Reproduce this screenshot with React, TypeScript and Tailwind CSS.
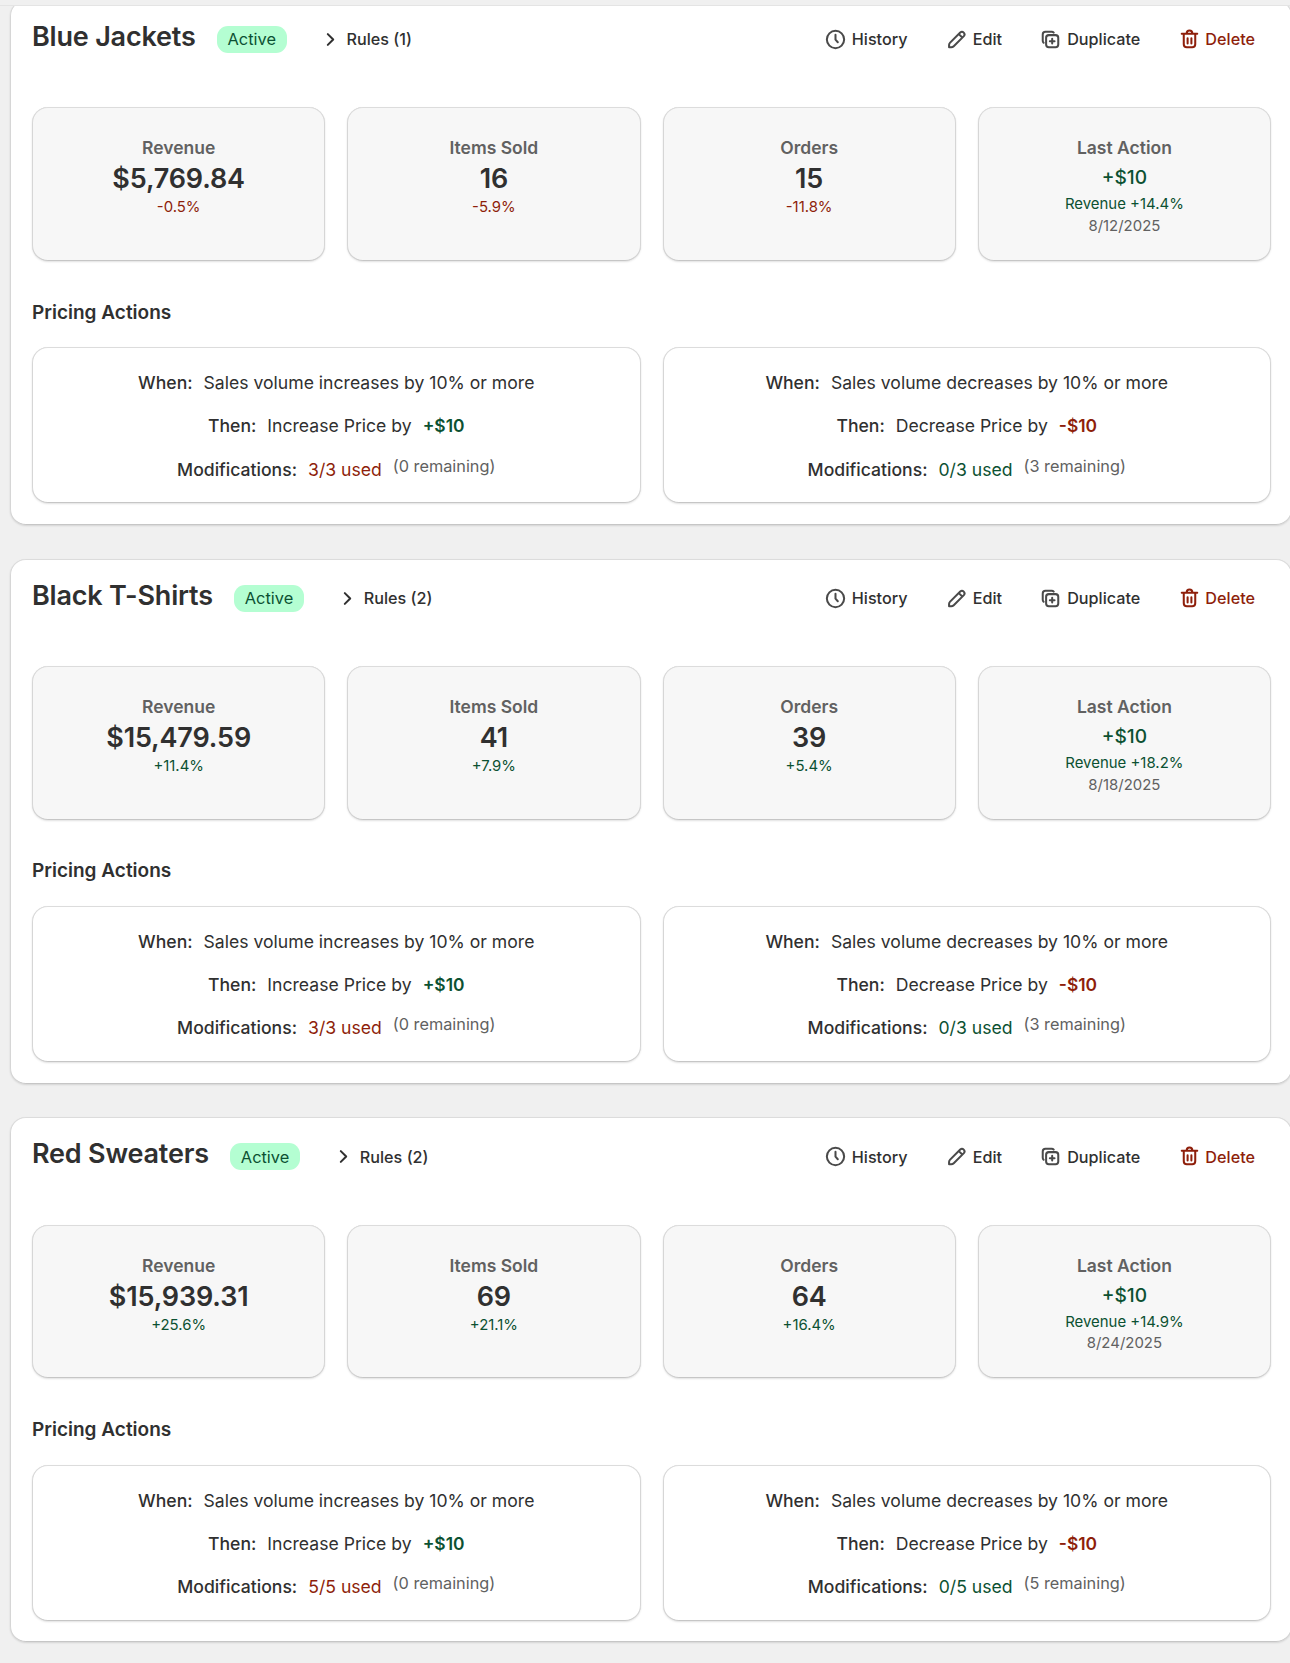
import React from "react";

type Metric = { label: string; value: string; change: string };
type Modification = { used: string; remaining: string };
type Strategy = {
  name: string;
  rules: number;
  metrics: Metric[];
  last: { revenue: string; date: string };
  increase: Modification;
  decrease: Modification;
};

const strategies: Strategy[] = [
  {
    name: "Blue Jackets",
    rules: 1,
    metrics: [
      { label: "Revenue", value: "$5,769.84", change: "-0.5%" },
      { label: "Items Sold", value: "16", change: "-5.9%" },
      { label: "Orders", value: "15", change: "-11.8%" },
    ],
    last: { revenue: "Revenue +14.4%", date: "8/12/2025" },
    increase: { used: "3/3 used", remaining: "(0 remaining)" },
    decrease: { used: "0/3 used", remaining: "(3 remaining)" },
  },
  {
    name: "Black T-Shirts",
    rules: 2,
    metrics: [
      { label: "Revenue", value: "$15,479.59", change: "+11.4%" },
      { label: "Items Sold", value: "41", change: "+7.9%" },
      { label: "Orders", value: "39", change: "+5.4%" },
    ],
    last: { revenue: "Revenue +18.2%", date: "8/18/2025" },
    increase: { used: "3/3 used", remaining: "(0 remaining)" },
    decrease: { used: "0/3 used", remaining: "(3 remaining)" },
  },
  {
    name: "Red Sweaters",
    rules: 2,
    metrics: [
      { label: "Revenue", value: "$15,939.31", change: "+25.6%" },
      { label: "Items Sold", value: "69", change: "+21.1%" },
      { label: "Orders", value: "64", change: "+16.4%" },
    ],
    last: { revenue: "Revenue +14.9%", date: "8/24/2025" },
    increase: { used: "5/5 used", remaining: "(0 remaining)" },
    decrease: { used: "0/5 used", remaining: "(5 remaining)" },
  },
];

function Icon({ children }: { children: React.ReactNode }) {
  return (
    <svg
      viewBox="0 0 20 20"
      className="size-[27px] shrink-0"
      fill="none"
      stroke="currentColor"
      strokeWidth="1.5"
      strokeLinecap="round"
      strokeLinejoin="round"
    >
      {children}
    </svg>
  );
}

const ChevronIcon = () => (
  <Icon>
    <path d="M8 6l4 4-4 4" />
  </Icon>
);
const ClockIcon = () => (
  <Icon>
    <circle cx="10" cy="10" r="6.4" />
    <path d="M10 6.5v3.6l1.7 1.9" />
  </Icon>
);
const EditIcon = () => (
  <Icon>
    <path d="M4.5 15.75v-1.6c0-.7.28-1.36.77-1.85l7.5-7.5a1.9 1.9 0 0 1 2.68 2.68l-7.5 7.5c-.5.5-1.16.77-1.85.77zM11.75 6l2.5 2.5" />
  </Icon>
);
const DuplicateIcon = () => (
  <Icon>
    <rect x="6.75" y="6.75" width="9" height="9" rx="2" />
    <path d="M4.9 12.4a2 2 0 0 1-.65-1.5V6.25a2 2 0 0 1 2-2h4.65a2 2 0 0 1 1.5.65M11.25 9.5v3.5M9.5 11.25h3.5" />
  </Icon>
);
const TrashIcon = () => (
  <Icon>
    <path d="M4.25 5.75h11.5M7.9 5.5a2.1 2.1 0 0 1 4.2 0M5.75 6v7.5a2.25 2.25 0 0 0 2.25 2.25h4a2.25 2.25 0 0 0 2.25-2.25V6M8.6 9v4M11.4 9v4" />
  </Icon>
);

function HeaderAction({ icon, label, tone }: { icon: React.ReactNode; label: string; tone?: string }) {
  return (
    <button className={`flex h-[37.2px] items-center text-[16.2px] font-medium ${tone ?? "text-[#303030]"}`}>
      <span className={tone ? "" : "text-[#4a4a4a]"}>{icon}</span>
      <span className="ml-[2.8px]">{label}</span>
    </button>
  );
}

const panelShadow =
  "shadow-[0_1px_2px_rgba(0,0,0,0.12),inset_0_1px_0_#dcdcdc,inset_1px_0_0_#d6d6d6,inset_-1px_0_0_#d6d6d6,inset_0_-1px_0_#c6c6c6]";

function StatCard({ label, children }: { label: string; children: React.ReactNode }) {
  return (
    <div className={`flex h-[153.6px] flex-col items-center rounded-[16px] bg-[#f7f7f7] pt-[27px] ${panelShadow}`}>
      <div className="text-[17.5px] leading-[27px] font-semibold text-[#616161]">{label}</div>
      {children}
    </div>
  );
}

function RuleLine({ label, children }: { label: string; children: React.ReactNode }) {
  return (
    <div className="flex h-[27px] gap-[11px] leading-[27px]">
      <span className="font-medium">{label}</span>
      {children}
    </div>
  );
}

function PricingCard({ up, mod }: { up: boolean; mod: Modification }) {
  return (
    <div
      className={`flex h-[156px] flex-col items-center gap-[16.1px] rounded-[16px] bg-white pt-[22px] text-[17.6px] text-[#303030] ${panelShadow}`}
    >
      <RuleLine label="When:">
        <span>Sales volume {up ? "increases" : "decreases"} by 10% or more</span>
      </RuleLine>
      <RuleLine label="Then:">
        <span>{up ? "Increase" : "Decrease"} Price by</span>
        <span className={up ? "text-[17.4px] font-semibold text-[#0c5132]" : "text-[17.4px] font-semibold text-[#8e1f0b]"}>
          {up ? "+$10" : "-$10"}
        </span>
      </RuleLine>
      <RuleLine label="Modifications:">
        <span className={up ? "text-[#8e1f0b]" : "text-[#0c5132]"}>{mod.used}</span>
        <span className="text-[16.3px] leading-[21.5px] text-[#616161]">{mod.remaining}</span>
      </RuleLine>
    </div>
  );
}

function StrategyCard({ s }: { s: Strategy }) {
  return (
    <section className={`h-[525px] w-[1282px] rounded-[16px] bg-white pr-[21px] pl-[22px] pt-[21px] ${panelShadow}`}>
      <div className="flex h-[38px] justify-between">
        <div className="flex">
          <h2 className="text-[27px] leading-[32.2px] font-semibold tracking-[-0.2px] text-[#303030]">{s.name}</h2>
          <span className="mt-[5.2px] ml-[21px] flex h-[27px] items-center rounded-[11px] bg-[#b4fed2] px-[11px] text-[16.4px] text-[#0c5132]">
            Active
          </span>
          <button className="ml-[30px] flex h-[37.2px] items-center text-[16.2px] font-medium text-[#303030]">
            <ChevronIcon />
            <span className="ml-[2.5px]">Rules ({s.rules})</span>
          </button>
        </div>
        <div className="flex gap-[35.3px] pr-[16px]">
          <HeaderAction icon={<ClockIcon />} label="History" />
          <HeaderAction icon={<EditIcon />} label="Edit" />
          <HeaderAction icon={<DuplicateIcon />} label="Duplicate" />
          <HeaderAction icon={<TrashIcon />} label="Delete" tone="text-[#8e1f0b]" />
        </div>
      </div>
      <div className="mt-[48.5px] grid grid-cols-4 gap-[22px]">
        {s.metrics.map((m) => (
          <StatCard key={m.label} label={m.label}>
            <div className="text-[27px] leading-[36.8px] font-semibold tracking-[-0.15px] text-[#303030]">{m.value}</div>
            <div
              className={`text-[14.9px] leading-[19px] ${m.change.startsWith("-") ? "text-[#8e1f0b]" : "text-[#0c5132]"}`}
            >
              {m.change}
            </div>
          </StatCard>
        ))}
        <StatCard label="Last Action">
          <div className="text-[19.1px] leading-[33px] font-medium text-[#0c5132]">+$10</div>
          <div className="text-[14.95px] leading-[21.5px] text-[#0c5132]">{s.last.revenue}</div>
          <div className="text-[14.95px] leading-[21.5px] text-[#616161]">{s.last.date}</div>
        </StatCard>
      </div>
      <h3 className="mt-[37.8px] text-[19px] leading-[27px] font-semibold text-[#303030]">Pricing Actions</h3>
      <div className="mt-[21.8px] grid grid-cols-2 gap-[22px]">
        <PricingCard up mod={s.increase} />
        <PricingCard up={false} mod={s.decrease} />
      </div>
    </section>
  );
}

export default function App() {
  return (
    <div className="relative h-[1663px] w-[1290px] overflow-hidden bg-[#f0f0f0] font-['Inter',sans-serif]">
      <div className="-mt-[0.3px] flex flex-col gap-[33.8px] pl-[10px]">
        {strategies.map((s) => (
          <StrategyCard key={s.name} s={s} />
        ))}
      </div>
      <div className="absolute inset-x-0 top-0 h-[6px] border-b border-[#e4e4e4] bg-[#f0f0f0]" />
    </div>
  );
}
